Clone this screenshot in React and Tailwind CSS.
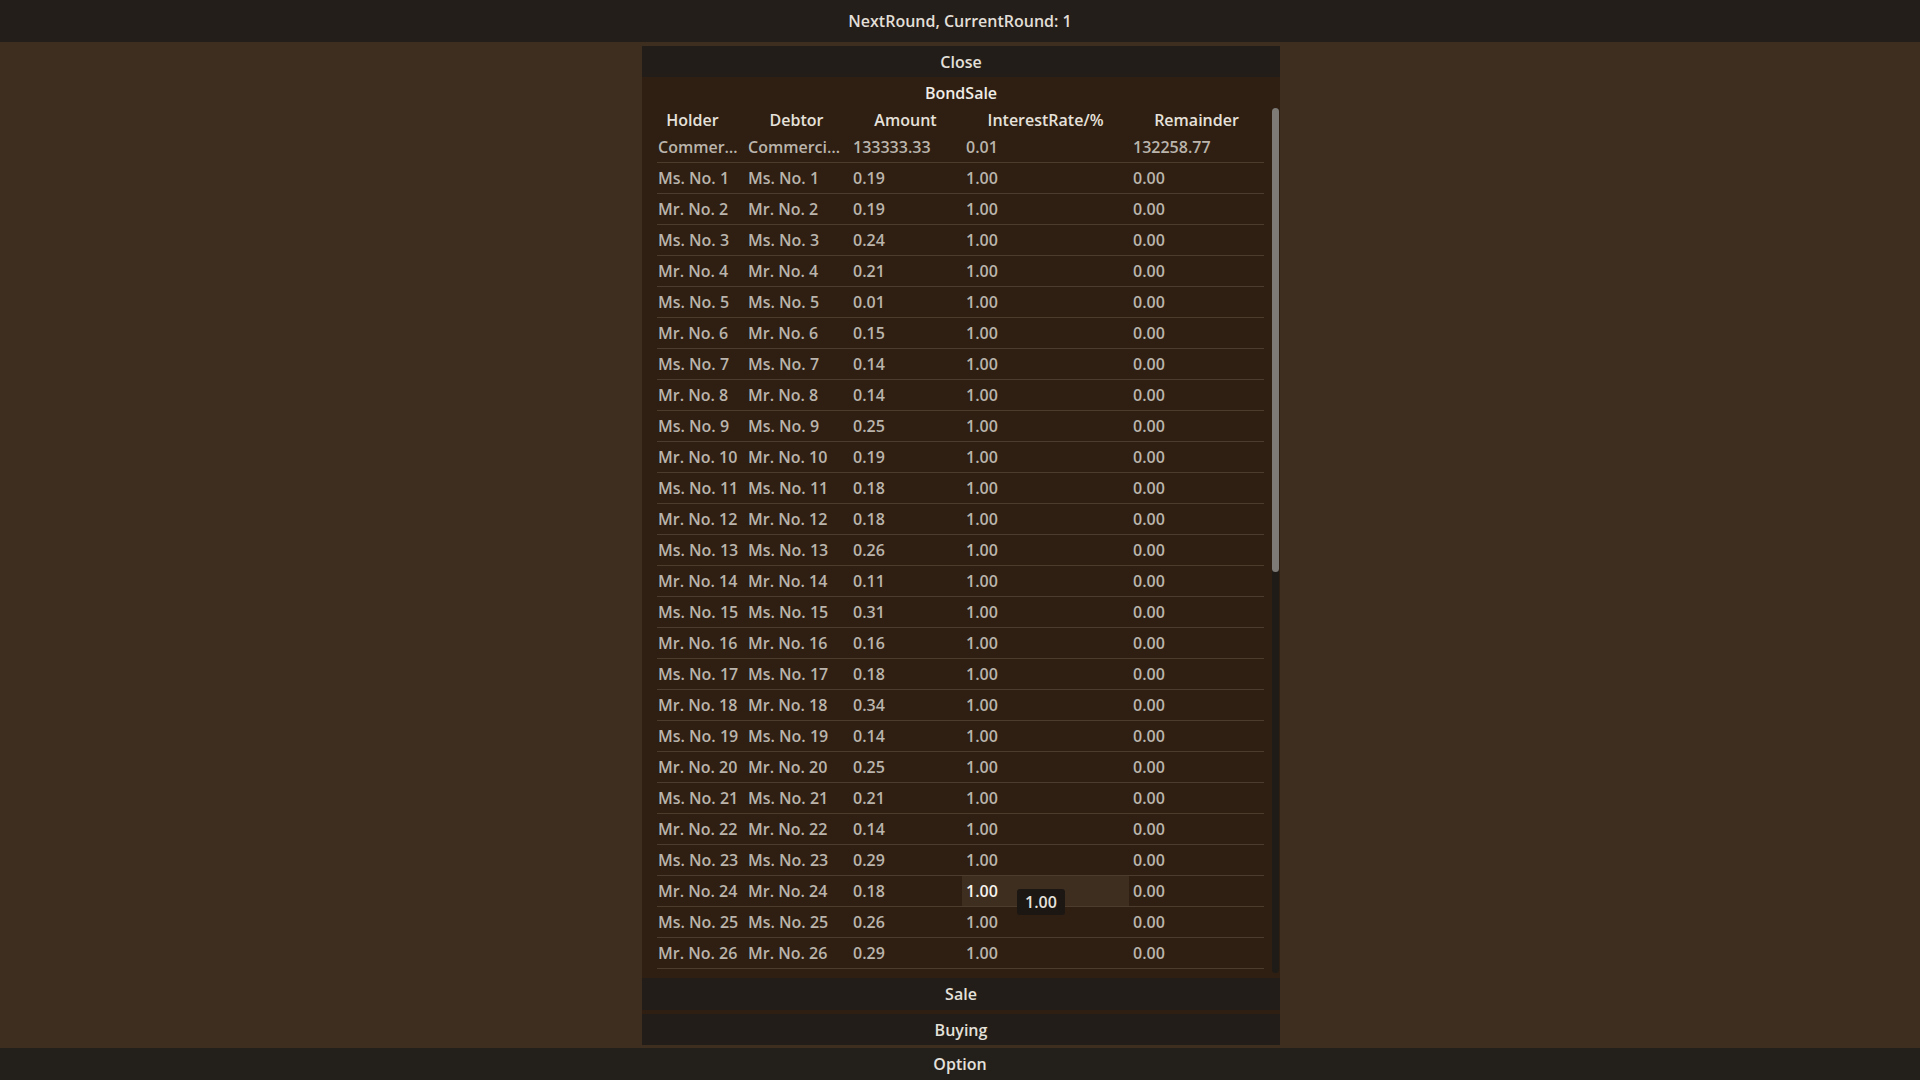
import React from "react";

const amounts = [
  "0.19", "0.19", "0.24", "0.21", "0.01", "0.15", "0.14", "0.14", "0.25", "0.19",
  "0.18", "0.18", "0.26", "0.11", "0.31", "0.16", "0.18", "0.34", "0.14", "0.25",
  "0.21", "0.14", "0.29", "0.18", "0.26", "0.29",
];

const bonds = [
  { holder: "Commer…", debtor: "Commerci…", amount: "133333.33", rate: "0.01", rest: "132258.77" },
  ...amounts.map((amount, i) => {
    const name = `${i % 2 === 0 ? "Ms." : "Mr."} No. ${i + 1}`;
    return { holder: name, debtor: name, amount, rate: "1.00", rest: "0.00" };
  }),
];

const cols = "grid grid-cols-[87px_105px_113px_167px_135px]";

const Bar = ({ children, className = "" }) => (
  <div className={`flex items-center justify-center bg-[#221d18] text-[#e4e0da] ${className}`}>{children}</div>
);

const App = () => {
  return (
    <div className="w-[1920px] h-[1080px] flex flex-col bg-[#3d2e1f] font-['Open_Sans','Noto_Sans',sans-serif] font-semibold text-[16px] overflow-hidden">
      <div className="h-[42px] shrink-0 flex items-center justify-center bg-[#231e19] text-[#e2ded8]">
        NextRound, CurrentRound: 1
      </div>

      <div className="flex-1 flex justify-center pt-[4px] pb-[3px]">
        <div className="w-[638px] ml-[2px] flex flex-col bg-[#2e1f12]">
          <Bar className="h-[31px]">Close</Bar>
          <div className="h-[31px] flex items-center justify-center text-[#f0ece6]">BondSale</div>

          <div className="h-[865px] flex">
            <div className="w-[622px] pl-[15px] overflow-hidden">
              <div className={`${cols} h-[24px] items-center text-center text-[#e6e1db]`}>
                <div className="pr-[16px]">Holder</div>
                <div>Debtor</div>
                <div>Amount</div>
                <div>InterestRate/%</div>
                <div>Remainder</div>
              </div>
              {bonds.map((b, idx) => (
                <div
                  key={idx}
                  className={`${cols} h-[31px] items-stretch border-b border-[#4b3c2d] text-[#bab4ac] whitespace-nowrap`}
                >
                  <div className="flex items-center pl-[1px]">{b.holder}</div>
                  <div className="flex items-center pl-[4px]">{b.debtor}</div>
                  <div className="flex items-center pl-[4px]">{b.amount}</div>
                  {idx === 24 ? (
                    <div className="relative flex items-center pl-[4px] bg-[#3e2e20] text-[#f4f1ec]">
                      {b.rate}
                      <div className="absolute left-[55px] top-[13px] w-[48px] h-[26px] flex items-center justify-center rounded-[3px] bg-[#1c1713] text-[#e6e2dc] z-10">
                        1.00
                      </div>
                    </div>
                  ) : (
                    <div className="flex items-center pl-[4px]">{b.rate}</div>
                  )}
                  <div className="flex items-center pl-[4px]">{b.rest}</div>
                </div>
              ))}
            </div>
            <div className="ml-[8px] w-[7px] h-full rounded-full bg-[#1f1b17] flex flex-col">
              <div className="h-[464px] rounded-full bg-[#7e7a76]" />
            </div>
          </div>

          <div className="h-[5px]" />
          <Bar className="h-[32px]">Sale</Bar>
          <div className="h-[4px]" />
          <Bar className="h-[31px]">Buying</Bar>
        </div>
      </div>

      <div className="h-[32px] shrink-0 flex items-center justify-center bg-[#231f1a] text-[#e4e0da]">Option</div>
    </div>
  );
};

export default App;
